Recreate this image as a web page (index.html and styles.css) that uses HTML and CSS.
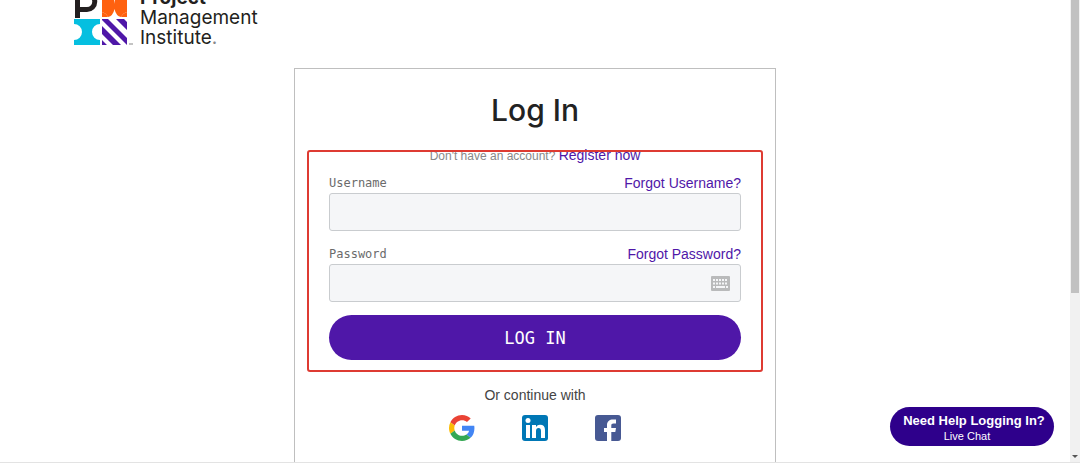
FILE: index.html
```html
<!DOCTYPE html>
<html lang="en">
<head>
<meta charset="utf-8">
<meta name="viewport" content="width=device-width, initial-scale=1">
<title>Log In - Project Management Institute</title>
<link rel="stylesheet" href="styles.css">
</head>
<body>
<div class="window">
  <div class="page">
    <header class="header">
      <div class="brand">
        <svg class="brand-mark" viewBox="0 0 60 56" width="60" height="56" aria-hidden="true">
          <path d="M4.500 28V4H14a7.500 7.500 0 0 1 0 15.500H4" fill="none" stroke="#231f20" stroke-width="5"/>
          <path d="M29 1H54V22Q50 23 48 27Q43 26 41.500 19Q40 26 35 27Q33 23 29 22Z" fill="#ff610f"/>
          <path d="M29 22Q33 23 35 27H29ZM54 22Q50 23 48 27H54Z" fill="#ff610f"/>
          <path d="M38 1H45Q42 6 41.500 14Q41 6 38 1Z" fill="#fff"/>
          <path d="M1 29H27V34A8 8 0 0 0 27 50V55H1V50A8 8 0 0 0 1 34Z" fill="#05bfe0"/>
          <path d="M29 29H35L54 48V55L29 30ZM43 29H51L54 32V40ZM29 36L48 55H40L29 44ZM29 50L34 55H29Z" fill="#4f17a8"/>
          <path d="M56 54H58M59 53V55" stroke="#888" stroke-width="1"/>
        </svg>
        <div class="brand-name"><strong>Project</strong><span>Management</span><span>Institute<span class="dot">.</span></span></div>
      </div>
    </header>
    <main class="card">
      <h1 class="title">Log In</h1>
      <form class="form">
        <p class="signup">Don't have an account? <a class="link" href="#">Register now</a></p>
        <div class="field">
          <div class="field-head"><label class="label" for="username">Username</label><a class="link" href="#">Forgot Username?</a></div>
          <input class="input" id="username" type="text">
        </div>
        <div class="field">
          <div class="field-head"><label class="label" for="password">Password</label><a class="link" href="#">Forgot Password?</a></div>
          <div class="input-wrap">
            <input class="input" id="password" type="password">
            <svg class="keyboard" viewBox="0 0 19 15" width="19" height="15" aria-hidden="true">
              <rect width="19" height="15" rx="1" fill="#b9babb"/>
              <path d="M2 4H17M2 7.500H17" stroke="#f5f6f8" stroke-width="2" stroke-dasharray="2 1"/>
              <path d="M2 11H4M5 11H14M15 11H17" stroke="#f5f6f8" stroke-width="2"/>
            </svg>
          </div>
        </div>
        <button class="submit" type="submit">LOG IN</button>
      </form>
      <p class="or">Or continue with</p>
      <div class="social">
        <a href="#" aria-label="Google"><svg viewBox="0 0 48 48" width="26" height="26">
          <path fill="#ea4335" d="M24 9.500c3.540 0 6.710 1.220 9.210 3.600l6.850-6.850C35.900 2.380 30.470 0 24 0 14.620 0 6.510 5.380 2.560 13.220l7.980 6.190C12.430 13.720 17.740 9.500 24 9.500z"/>
          <path fill="#4285f4" d="M46.980 24.550c0-1.570-.15-3.090-.38-4.550H24v9.020h12.940c-.58 2.960-2.260 5.480-4.780 7.180l7.730 6c4.510-4.180 7.090-10.360 7.090-17.650z"/>
          <path fill="#fbbc05" d="M10.530 28.590A14.500 14.500 0 0 1 9.770 24c0-1.600.27-3.140.76-4.590l-7.980-6.190A23.900 23.900 0 0 0 0 24c0 3.880.92 7.540 2.560 10.780l7.970-6.190z"/>
          <path fill="#34a853" d="M24 48c6.480 0 11.930-2.130 15.890-5.810l-7.730-6c-2.150 1.450-4.920 2.300-8.160 2.300-6.260 0-11.570-4.220-13.470-9.910l-7.980 6.190C6.510 42.620 14.620 48 24 48z"/>
        </svg></a>
        <a href="#" aria-label="LinkedIn"><svg viewBox="0 0 26 26" width="26" height="26">
          <rect width="26" height="26" rx="3" fill="#0077b5"/>
          <circle cx="6" cy="5.500" r="2.500" fill="#fff"/>
          <path fill="#fff" d="M4 10H8V23H4ZM10 10H14V12Q15.300 9.700 18 9.700Q23 9.700 23 15V23H19V16Q19 13 16.600 13Q14 13 14 16V23H10Z"/>
        </svg></a>
        <a href="#" aria-label="Facebook"><svg viewBox="0 0 26 26" width="26" height="26">
          <rect width="26" height="26" rx="3" fill="#475993"/>
          <path fill="#fff" d="M12 26V17H9V13H12V10C12 6.500 14.500 4.500 18 4.500H21V8.500H18.500C16.800 8.500 16.300 9.300 16.300 10.500V13H21L20.300 17H16.300V26Z"/>
        </svg></a>
      </div>
    </main>
    <button class="chat" type="button"><strong>Need Help Logging In?</strong><span>Live Chat</span></button>
  </div>
  <div class="scrollbar" aria-hidden="true">
    <div class="thumb"></div>
    <div class="arrow"></div>
  </div>
</div>
<div class="bottom-edge"></div>
</body>
</html>
```
FILE: styles.css
```css
* { box-sizing: border-box; }
body {
  margin: 0;
  height: 100vh;
  display: flex;
  flex-direction: column;
  overflow: hidden;
  background: #fff;
  color: #444;
  font: 14px/16px "Liberation Sans", Arial, sans-serif;
}
p, h1 { margin: 0; }
.window { flex: 1; min-height: 0; display: flex; }
.page { flex: 1; position: relative; overflow: hidden; }
.header {
  height: 48px;
  padding: 0 73px;
  display: flex;
  align-items: flex-end;
  overflow: hidden;
}
.brand { display: flex; align-items: flex-end; gap: 7px; }
.brand-mark { margin-bottom: 2px; }
.brand-name {
  display: flex;
  flex-direction: column;
  color: #231f20;
  font: 19px/20px Inter, "Liberation Sans", sans-serif;
}
.dot { color: #888; }
.card {
  width: 482px;
  max-width: 100%;
  margin: 20px auto 0;
  padding: 21px 34px 60px;
  border: 1px solid #bfbfbf;
}
.title {
  text-align: center;
  color: #222;
  font: 500 30px/40px Inter, "Liberation Sans", sans-serif;
}
.form {
  position: relative;
  margin-top: 17px;
  display: flex;
  flex-direction: column;
  gap: 15px;
}
.form::after {
  content: "";
  position: absolute;
  inset: 3px -22px -12px;
  border: 2px solid #de3b32;
  border-radius: 3px;
  pointer-events: none;
}
.signup { text-align: center; font-size: 12px; color: #888; margin-bottom: -4px; }
.link { font-size: 14px; color: #4f17a8; text-decoration: none; }
.field-head { display: flex; justify-content: space-between; align-items: center; margin-bottom: 2px; }
.label { color: #6b6b6b; font: 12px/16px "DejaVu Sans Mono", monospace; }
.input-wrap { position: relative; }
.input {
  display: block;
  width: 100%;
  height: 38px;
  padding: 0 10px;
  border: 1px solid #c9cccf;
  border-radius: 3px;
  background: #f5f6f8;
  font: inherit;
}
.keyboard { position: absolute; right: 11px; top: 12px; }
.submit {
  height: 45px;
  margin-top: -2px;
  border: 0;
  border-radius: 23px;
  background: #4f17a8;
  color: #fff;
  font: 17px/20px "DejaVu Sans Mono", monospace;
}
.or { margin-top: 27px; text-align: center; }
.social { margin-top: 12px; display: flex; justify-content: center; gap: 47px; }
.social a, .social svg { display: block; }
.chat {
  position: absolute;
  right: 16px;
  bottom: 16px;
  width: 164px;
  height: 39px;
  padding: 2px 0 0 4px;
  border: 0;
  border-radius: 20px;
  background: #2e008b;
  color: #fff;
  font: 11px/14px "Liberation Sans", Arial, sans-serif;
}
.chat strong { display: block; font-size: 13px; line-height: 17px; white-space: nowrap; }
.chat span { display: block; padding-right: 14px; }
.scrollbar {
  width: 10px;
  padding: 0 1px 4px;
  display: flex;
  flex-direction: column;
  justify-content: space-between;
  align-items: center;
  background: #f1f1f1;
}
.thumb { width: 8px; height: 64%; background: #c1c1c1; }
.arrow { border: 3px solid transparent; border-top: 3px solid #555; border-bottom: 0; }
.bottom-edge { height: 3px; border-top: 1px solid #e3e3e3; }
```
